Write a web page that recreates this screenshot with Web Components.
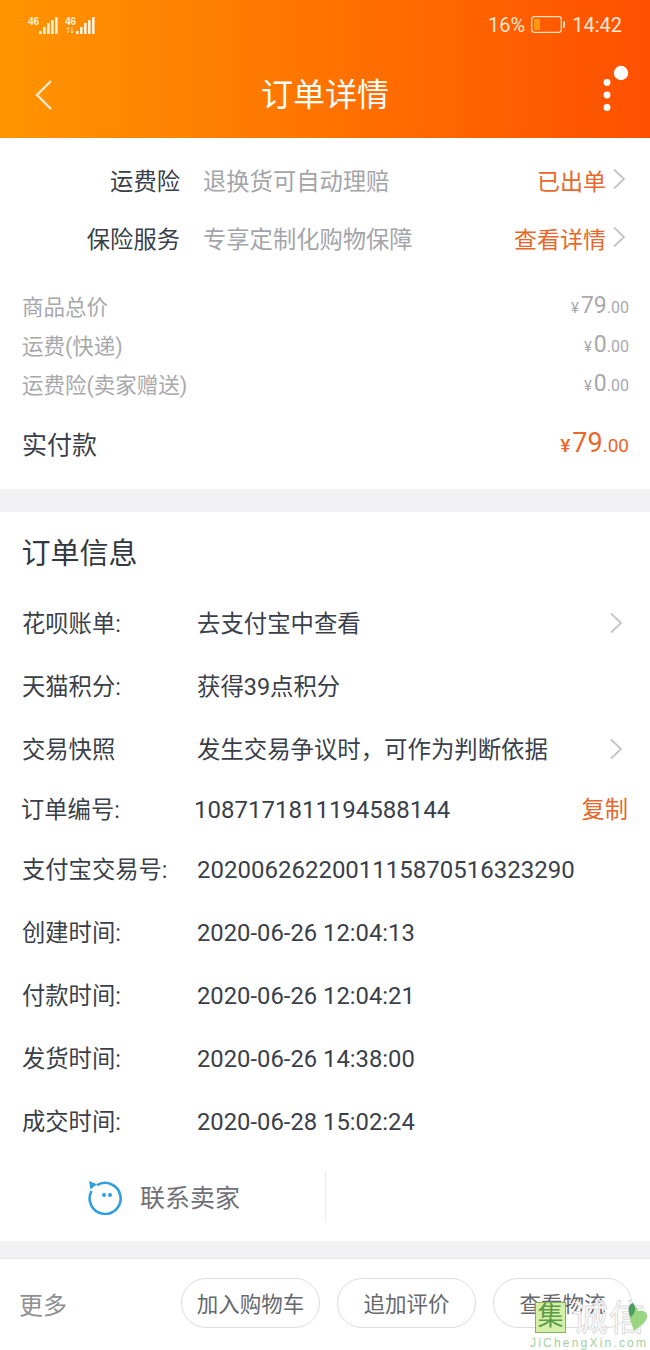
<!DOCTYPE html>
<html>
<head>
<meta charset="utf-8">
<style>
  html, body { margin: 0; padding: 0; background: #fff; }
  body { width: 650px; height: 1350px; overflow: hidden; font-family: Roboto, "Noto Sans CJK SC", sans-serif; }
  order-page { display: block; }
</style>
</head>
<body>
<order-page>
  <top-bar></top-bar>
  <order-section h="351">
    <service-row h="58" top="13" label="运费险" desc="退换货可自动理赔" state="已出单"></service-row>
    <service-row h="58" label="保险服务" desc="专享定制化购物保障" state="查看详情"></service-row>
    <div style="height:19px"></div>
    <price-row label="商品总价" amount="79"></price-row>
    <price-row label="运费(快递)" amount="0"></price-row>
    <price-row label="运费险(卖家赠送)" amount="0"></price-row>
    <price-row total label="实付款" amount="79"></price-row>
  </order-section>
  <section-gap h="23"></section-gap>
  <order-section h="729">
    <section-title>订单信息</section-title>
    <info-row h="63" label="花呗账单:" value="去支付宝中查看" arrow></info-row>
    <info-row h="63" label="天猫积分:" value="获得39点积分"></info-row>
    <info-row h="63" label="交易快照" value="发生交易争议时，可作为判断依据" arrow></info-row>
    <info-row h="58" label="订单编号:" value="1087171811194588144" action="复制" shift></info-row>
    <info-row h="62" label="支付宝交易号:" value="2020062622001115870516323290"></info-row>
    <info-row h="63" label="创建时间:" value="2020-06-26 12:04:13"></info-row>
    <info-row h="63" label="付款时间:" value="2020-06-26 12:04:21"></info-row>
    <info-row h="63" label="发货时间:" value="2020-06-26 14:38:00"></info-row>
    <info-row h="63" label="成交时间:" value="2020-06-28 15:02:24"></info-row>
    <contact-bar></contact-bar>
  </order-section>
  <section-gap h="17"></section-gap>
  <bottom-bar></bottom-bar>
</order-page>
<water-mark></water-mark>

<script>
const CJK = `Roboto, "Noto Sans CJK SC", sans-serif`;

class TopBar extends HTMLElement {
  constructor() {
    super();
    this.attachShadow({ mode: "open" });
  }
  connectedCallback() {
    const bars = (arrows) => /* svg */ `
      <svg width="32" height="20" viewBox="0 0 32 20" fill="#fff0d8">
        <text x="0" y="8.5" font-size="10" font-weight="700" font-family="Liberation Sans">46</text>
        ${arrows ? `<path d="M3 11 V17 M1.5 12.5 L3 11 L4.5 12.5 M7 11 V17 M5.5 15.5 L7 17 L8.5 15.5" fill="none" stroke="#fff0d8" stroke-width="0.8"/>` : ""}
        <rect x="11" y="15" width="2.6" height="3"/>
        <rect x="15" y="11" width="2.6" height="7"/>
        <rect x="19" y="7" width="2.6" height="11"/>
        <rect x="23" y="4" width="2.6" height="14"/>
        <rect x="27" y="1" width="2.6" height="17"/>
      </svg>`;
    this.shadowRoot.innerHTML = /* html */ `
      <style>
        :host {
          display: block;
          height: 138px;
          background: linear-gradient(90deg, #ff9500, #ff5000);
          color: #fff;
        }
        .status {
          height: 50px;
          display: flex;
          align-items: center;
          justify-content: space-between;
          padding: 0 28px;
          box-sizing: border-box;
          color: #ffe9d4;
        }
        .sig { display: flex; gap: 5px; margin-top: 2px; }
        .sig svg { display: block; }
        .right { display: flex; align-items: center; font-size: 20px; }
        .batt { margin: 0 7px 0 6px; display: block; }
        .nav {
          height: 88px;
          position: relative;
          display: flex;
          align-items: center;
          justify-content: center;
        }
        .title { font-size: 32px; font-family: ${CJK}; margin-bottom: 4px; }
        .back { position: absolute; left: 33px; top: 29px; }
        .more { position: absolute; left: 598px; top: 14px; }
      </style>
      <div class="status">
        <div class="sig">${bars(false)}${bars(true)}</div>
        <div class="right">
          <span>16%</span>
          <svg class="batt" width="34" height="18" viewBox="0 0 34 18">
            <rect x="0.7" y="0.7" width="29.6" height="15.6" rx="2.5" fill="none" stroke="#ffe0c0" stroke-width="1.3"/>
            <rect x="3" y="3" width="6" height="11" fill="#ff9a10"/>
            <rect x="32" y="5" width="2" height="7" rx="1" fill="#ffe0c0"/>
          </svg>
          <span>14:42</span>
        </div>
      </div>
      <div class="nav">
        <svg class="back" width="20" height="32" viewBox="0 0 20 32">
          <path d="M18 2 L4 16 L18 30" fill="none" stroke="#ffe9d4" stroke-width="2.4"/>
        </svg>
        <div class="title">订单详情</div>
        <svg class="more" width="36" height="54" viewBox="0 0 36 54" fill="#fff">
          <circle cx="9" cy="18.5" r="3.4"/>
          <circle cx="9" cy="31" r="3.4"/>
          <circle cx="9" cy="43.5" r="3.4"/>
          <circle cx="23" cy="9" r="7.2"/>
        </svg>
      </div>`;
  }
}

class OrderSection extends HTMLElement {
  constructor() {
    super();
    this.attachShadow({ mode: "open" });
  }
  connectedCallback() {
    this.shadowRoot.innerHTML = /* html */ `
      <style>
        :host { display: block; background: #fff; height: ${this.getAttribute("h")}px; overflow: hidden; }
      </style>
      <slot></slot>`;
  }
}

class SectionGap extends HTMLElement {
  constructor() {
    super();
    this.attachShadow({ mode: "open" });
  }
  connectedCallback() {
    this.shadowRoot.innerHTML = /* html */ `
      <style>
        :host { display: block; background: #f2f2f4; height: ${this.getAttribute("h")}px; }
      </style>`;
  }
}

const chevron = /* html */ `
  <svg width="14" height="22" viewBox="0 0 14 22" style="display:block;margin-bottom:2px">
    <path d="M2 1.5 L12 11 L2 20.5" fill="none" stroke="#c4c4c6" stroke-width="1.8"/>
  </svg>`;

class ServiceRow extends HTMLElement {
  constructor() {
    super();
    this.attachShadow({ mode: "open" });
  }
  connectedCallback() {
    const top = this.getAttribute("top") || 0;
    this.shadowRoot.innerHTML = /* html */ `
      <style>
        :host {
          display: flex;
          align-items: center;
          height: ${this.getAttribute("h")}px;
          margin-top: ${top}px;
          font-family: ${CJK};
          font-size: 23.3px;
          padding-right: 24px;
        }
        .label { width: 180px; text-align: right; color: #3a3f4a; }
        .desc { margin-left: 23px; flex: 1; color: #a4a5a9; }
        .state { color: #e8672a; margin-right: 6px; font-size: 23px; }
      </style>
      <span class="label">${this.getAttribute("label")}</span>
      <span class="desc">${this.getAttribute("desc")}</span>
      <span class="state">${this.getAttribute("state")}</span>
      ${chevron}`;
  }
}

class PriceRow extends HTMLElement {
  constructor() {
    super();
    this.attachShadow({ mode: "open" });
  }
  connectedCallback() {
    const total = this.hasAttribute("total");
    this.shadowRoot.innerHTML = /* html */ `
      <style>
        :host {
          display: flex;
          justify-content: space-between;
          align-items: center;
          height: ${total ? 79 : 39}px;
          padding: 0 21px 0 22px;
          font-family: ${CJK};
          color: #a8a9ac;
          font-size: 21.5px;
        }
        :host([total]) { color: #e8672a; }
        :host([total]) .label { color: #3a3f4a; font-size: 25px; }
        .amt { display: flex; align-items: baseline; font-family: Roboto, sans-serif; }
        .y { font-size: 15px; margin-right: 2px; }
        .n { font-size: 23px; }
        .d { font-size: 16px; }
        :host([total]) .y { font-size: 19px; font-weight: 500; }
        :host([total]) .n { font-size: 27px; }
        :host([total]) .d { font-size: 19px; }
      </style>
      <span class="label">${this.getAttribute("label")}</span>
      <span class="amt"><span class="y">¥</span><span class="n">${this.getAttribute("amount")}</span><span class="d">.00</span></span>`;
  }
}

class SectionTitle extends HTMLElement {
  constructor() {
    super();
    this.attachShadow({ mode: "open" });
  }
  connectedCallback() {
    this.shadowRoot.innerHTML = /* html */ `
      <style>
        :host {
          display: flex;
          align-items: center;
          height: 78px;
          padding: 0 0 2px 21.5px;
          font-family: ${CJK};
          font-size: 29px;
          color: #333740;
        }
      </style>
      <slot></slot>`;
  }
}

class InfoRow extends HTMLElement {
  constructor() {
    super();
    this.attachShadow({ mode: "open" });
  }
  connectedCallback() {
    const action = this.getAttribute("action");
    const value = this.getAttribute("value");
    const numeric = /^[\d-: ]+$/.test(value);
    const date = value.includes(":");
    this.shadowRoot.innerHTML = /* html */ `
      <style>
        :host {
          display: flex;
          align-items: center;
          height: ${this.getAttribute("h")}px;
          padding: 0 27px 0 22px;
          font-family: ${CJK};
          font-size: 23.3px;
          color: #3a3f4a;
        }
        .label { width: 175px; flex: none; white-space: nowrap; margin-bottom: 4px; }
        :host([shift]) .label { width: 173px; margin-left: -1px; }
        .value { flex: 1; white-space: nowrap; font-size: 23.4px; margin-bottom: 4px; }
        .value.num { font-size: ${date ? 23.8 : 24}px; margin-bottom: 0; }
        .action { color: #e8672a; margin: 0 -5px 4px 0; }
      </style>
      <span class="label">${this.getAttribute("label")}</span>
      <span class="value ${numeric ? "num" : ""}">${value}</span>
      ${action ? `<span class="action">${action}</span>` : ""}
      ${this.hasAttribute("arrow") ? chevron : ""}`;
  }
}

class ContactBar extends HTMLElement {
  constructor() {
    super();
    this.attachShadow({ mode: "open" });
  }
  connectedCallback() {
    this.shadowRoot.innerHTML = /* html */ `
      <style>
        :host {
          display: flex;
          height: 50px;
          margin-top: 19px;
          font-family: ${CJK};
          font-size: 25px;
          color: #6f7176;
        }
        .cell {
          border-right: 1px solid #ececee;
          display: flex;
          align-items: center;
          padding-left: 86px;
          width: 239px;
          gap: 18px;
        }
        .cell span { margin-bottom: 3px; }
        svg { display: block; }
      </style>
      <div class="cell">
        <svg width="36" height="36" viewBox="0 0 36 36">
          <path d="M11 6.2 A15.5 15.5 0 1 1 5.5 12" fill="none" stroke="#2f9fe0" stroke-width="2.6"/>
          <path d="M3 2 L11 5.2 L4.5 10.5 Z" fill="#2f9fe0"/>
          <circle cx="18" cy="16" r="2" fill="#2f9fe0"/>
          <circle cx="24" cy="16" r="2" fill="#2f9fe0"/>
        </svg>
        <span>联系卖家</span>
      </div>`;
  }
}

class PillButton extends HTMLElement {
  constructor() {
    super();
    this.attachShadow({ mode: "open" });
  }
  connectedCallback() {
    this.shadowRoot.innerHTML = /* html */ `
      <style>
        :host {
          display: flex;
          align-items: center;
          justify-content: center;
          width: 139px;
          height: 50px;
          padding-bottom: 2px;
          box-sizing: border-box;
          border: 1.5px solid #dcdcde;
          border-radius: 25px;
          font-size: 21.5px;
          color: #66686c;
          font-family: ${CJK};
        }
      </style>
      <slot></slot>`;
  }
}

class BottomBar extends HTMLElement {
  constructor() {
    super();
    this.attachShadow({ mode: "open" });
  }
  connectedCallback() {
    this.shadowRoot.innerHTML = /* html */ `
      <style>
        :host {
          display: flex;
          align-items: center;
          height: 92px;
          padding: 0 18px 0 19px;
          background: #fff;
          border-top: 1px solid #eaeaec;
          box-sizing: border-box;
          font-family: ${CJK};
        }
        .more { font-size: 24px; color: #8f9094; flex: 1; margin-bottom: 3px; }
        .btns { display: flex; gap: 17px; margin-top: -3px; }
      </style>
      <span class="more">更多</span>
      <div class="btns">
        <pill-button>加入购物车</pill-button>
        <pill-button>追加评价</pill-button>
        <pill-button>查看物流</pill-button>
      </div>`;
  }
}

// watermark sits over the bottom bar
class WaterMark extends HTMLElement {
  constructor() {
    super();
    this.attachShadow({ mode: "open" });
  }
  connectedCallback() {
    this.shadowRoot.innerHTML = /* html */ `
      <style>
        :host {
          position: absolute;
          left: 530px;
          top: 1298px;
          width: 120px;
          height: 52px;
          font-family: ${CJK};
        }
        .box {
          position: absolute; left: 5px; top: 4px;
          width: 31px; height: 31px;
          background: #d4f0a8;
          border: 1.5px solid #7fb55c;
          box-sizing: border-box;
          color: #5f9a48;
          font-size: 26px;
          line-height: 27px;
          text-align: center;
          overflow: hidden;
        }
        .cn {
          position: absolute; left: 42px; top: 0;
          font-size: 36px;
          line-height: 42px;
          color: #fff;
          white-space: nowrap;
          letter-spacing: 1px;
          -webkit-text-stroke: 1px #dcdcdc;
        }
        .en {
          position: absolute; left: 0; top: 39px;
          font-size: 12px;
          line-height: 12px;
          letter-spacing: 2.2px;
          color: #a6cfa0;
          white-space: nowrap;
          font-family: "Liberation Sans", sans-serif;
        }
        svg { position: absolute; left: 97px; top: 4px; }
      </style>
      <div class="box">集</div>
      <div class="cn">诚信</div>
      <svg width="23" height="30" viewBox="0 0 23 30">
        <path d="M2 10 C2 2 10 3 11 9 C15 7 22 10 20 16 C18 22 10 26 7 29 C5 22 2 16 2 10 Z" fill="#9ad680"/>
        <path d="M6 1 C1 2 0 9 4 15 C8 12 10 5 6 1 Z" fill="#4d9c62"/>
      </svg>
      <div class="en">JiChengXin.com</div>`;
  }
}

customElements.define("top-bar", TopBar);
customElements.define("order-section", OrderSection);
customElements.define("section-gap", SectionGap);
customElements.define("service-row", ServiceRow);
customElements.define("price-row", PriceRow);
customElements.define("section-title", SectionTitle);
customElements.define("info-row", InfoRow);
customElements.define("contact-bar", ContactBar);
customElements.define("pill-button", PillButton);
customElements.define("bottom-bar", BottomBar);
customElements.define("water-mark", WaterMark);
</script>
</body>
</html>
